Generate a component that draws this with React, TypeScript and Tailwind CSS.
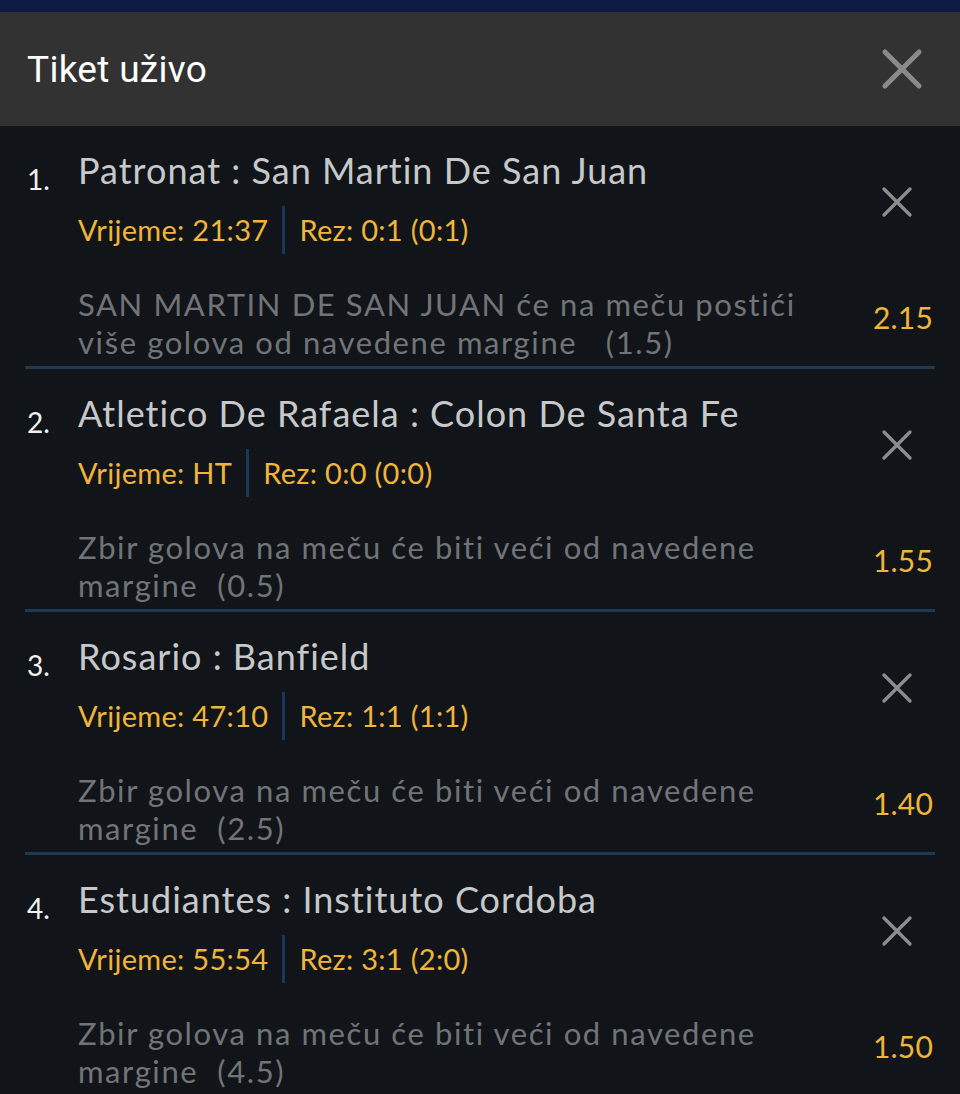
import { Fragment } from 'react';

type Bet = {
  match: string;
  time: string;
  score: string;
  lines: string[];
  odds: string;
};

const BETS: Bet[] = [
  {
    match: 'Patronat : San Martin De San Juan',
    time: '21:37',
    score: '0:1 (0:1)',
    lines: ['SAN MARTIN DE SAN JUAN će na meču postići', 'više golova od navedene margine   (1.5)'],
    odds: '2.15',
  },
  {
    match: 'Atletico De Rafaela : Colon De Santa Fe',
    time: 'HT',
    score: '0:0 (0:0)',
    lines: ['Zbir golova na meču će biti veći od navedene', 'margine  (0.5)'],
    odds: '1.55',
  },
  {
    match: 'Rosario : Banfield',
    time: '47:10',
    score: '1:1 (1:1)',
    lines: ['Zbir golova na meču će biti veći od navedene', 'margine  (2.5)'],
    odds: '1.40',
  },
  {
    match: 'Estudiantes : Instituto Cordoba',
    time: '55:54',
    score: '3:1 (2:0)',
    lines: ['Zbir golova na meču će biti veći od navedene', 'margine  (4.5)'],
    odds: '1.50',
  },
];

function Cross({ size, stroke }: { size: number; stroke: number }) {
  return (
    <svg width={size} height={size} viewBox="0 0 32 32" fill="none">
      <path d="M3 3 L29 29 M29 3 L3 29" stroke="currentColor" strokeWidth={stroke} strokeLinecap="round" />
    </svg>
  );
}

const lato = "font-['Lato','Liberation_Sans',sans-serif]";
const roboto = "font-['Roboto','Liberation_Sans',sans-serif]";

export default function App() {
  return (
    <div className="w-[960px] h-[1094px] overflow-hidden bg-[#111418] flex flex-col">
      <div className="h-[12px] bg-[#0d1b45] flex-shrink-0" />
      {/* header */}
      <div className="h-[114px] bg-[#323232] flex items-center justify-between pl-[27px] pr-[37px] flex-shrink-0">
        <span className={`${roboto} text-[37px] tracking-[0.3px] text-white leading-none`}>Tiket uživo</span>
        <span className="text-[#8a8a8a]">
          <Cross size={42} stroke={3.8} />
        </span>
      </div>

      {BETS.map((b, i) => (
        <div key={i} className={`${lato} px-[25px] pt-[24px] flex-shrink-0`}>
          <div className="flex items-center">
            <div className="flex-1 flex">
              <span className="w-[53px] pl-[2px] pt-[9px] text-[28px] leading-[40px] text-[#f2f2f2]">{i + 1}.</span>
              <div className="flex-1">
                <div className="text-[36px] tracking-[1px] leading-[40px] text-[#c6c8ca]">{b.match}</div>
                <div className="mt-[16px] h-[48px] flex items-center text-[29px] tracking-[0.3px] text-[#efb53a]">
                  <span>Vrijeme: {b.time}</span>
                  <span className="mx-[14px] w-[3px] h-[48px] bg-[#183a58]" />
                  <span>Rez: {b.score}</span>
                </div>
              </div>
            </div>
            <span className="text-[#8c8c8c] mr-[22px]">
              <Cross size={32} stroke={3.4} />
            </span>
          </div>
          <div className="flex items-center mt-[31px] pl-[53px]">
            <div className="flex-1 whitespace-pre text-[#717477] text-[31px] tracking-[1.6px] leading-[38px]">
              {b.lines.map((l, j) => (
                <Fragment key={j}>
                  {l}
                  {j < b.lines.length - 1 && <br />}
                </Fragment>
              ))}
            </div>
            <span className="pr-[2px] -mt-[12px] text-[30px] tracking-[0.2px] text-[#efb53a]">{b.odds}</span>
          </div>
          <div className="mt-[5px] h-[3px] bg-[#1d3a52]" />
        </div>
      ))}
    </div>
  );
}
